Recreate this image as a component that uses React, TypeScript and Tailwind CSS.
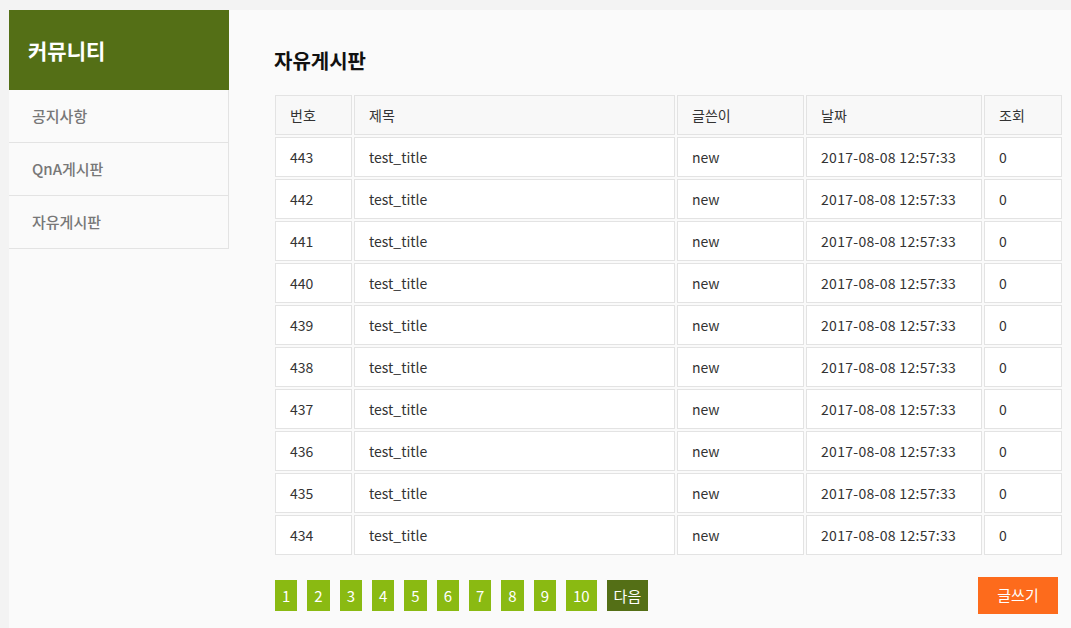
const menus = ["공지사항", "QnA게시판", "자유게시판"]

const posts = [443, 442, 441, 440, 439, 438, 437, 436, 435, 434].map((no) => ({
    no,
    title: "test_title",
    writer: "new",
    date: "2017-08-08 12:57:33",
    views: 0,
}))

const cols = "grid grid-cols-[77px_321px_127px_176px_78px] gap-[2px]"
const cell = "h-[40px] border border-[#e3e3e3] pl-[14px] flex items-center text-[14px] text-[#333]"

const Sidebar = () => {
    return (
        <div className="w-[220px] shrink-0">
            <div className="h-[80px] bg-[#546f16] flex items-center pl-[19px]">
                <span className="text-[21px] font-bold text-white leading-none">커뮤니티</span>
            </div>
            <div className="border-r border-[#e3e3e3] bg-[#fafafa]">
                {menus.map((m) => (
                    <div key={m} className="h-[53px] border-b border-[#e3e3e3] flex items-center pl-[23px] text-[15px] font-medium text-[#777]">
                        {m}
                    </div>
                ))}
            </div>
        </div>
    )
}

const Board = () => {
    return (
        <div className="flex-1 pl-[46px] pt-[37px]">
            <h2 className="text-[20px] font-bold text-[#111] leading-[28px] ml-[-1px]">자유게시판</h2>
            <div className="mt-[20px] flex flex-col gap-[2px]">
                <div className={cols}>
                    {["번호", "제목", "글쓴이", "날짜", "조회"].map((h) => (
                        <div key={h} className={cell + " bg-[#f8f8f8]"}>{h}</div>
                    ))}
                </div>
                {posts.map((p) => (
                    <div key={p.no} className={cols}>
                        <div className={cell + " bg-white"}>{p.no}</div>
                        <div className={cell + " bg-white"}>{p.title}</div>
                        <div className={cell + " bg-white"}>{p.writer}</div>
                        <div className={cell + " bg-white tracking-[0.3px]"}>{p.date}</div>
                        <div className={cell + " bg-white"}>{p.views}</div>
                    </div>
                ))}
            </div>
            <div className="mt-[22px] flex items-start w-[787px]">
                <div className="flex gap-[10px] mt-[3px]">
                    {[1, 2, 3, 4, 5, 6, 7, 8, 9, 10].map((n) => (
                        <button key={n} className="h-[31px] min-w-[22px] px-[7px] bg-[#8aba12] text-white text-[15px] leading-none">
                            {n}
                        </button>
                    ))}
                    <button className="h-[31px] px-[7px] bg-[#546f16] text-white text-[15px] leading-none">다음</button>
                </div>
                <button className="ml-auto mr-[4px] w-[80px] h-[37px] bg-[#fd6b1c] text-white text-[15px]">글쓰기</button>
            </div>
        </div>
    )
}

const App = () => {
    return (
        <div
            className="min-h-[628px] bg-[#f3f3f3] pt-[10px] pl-[9px]"
            style={{ fontFamily: '"Noto Sans CJK KR", "Noto Sans", sans-serif' }}
        >
            <div className="flex bg-[#fafafa] min-h-[618px]">
                <Sidebar />
                <Board />
            </div>
        </div>
    )
}

export default App
